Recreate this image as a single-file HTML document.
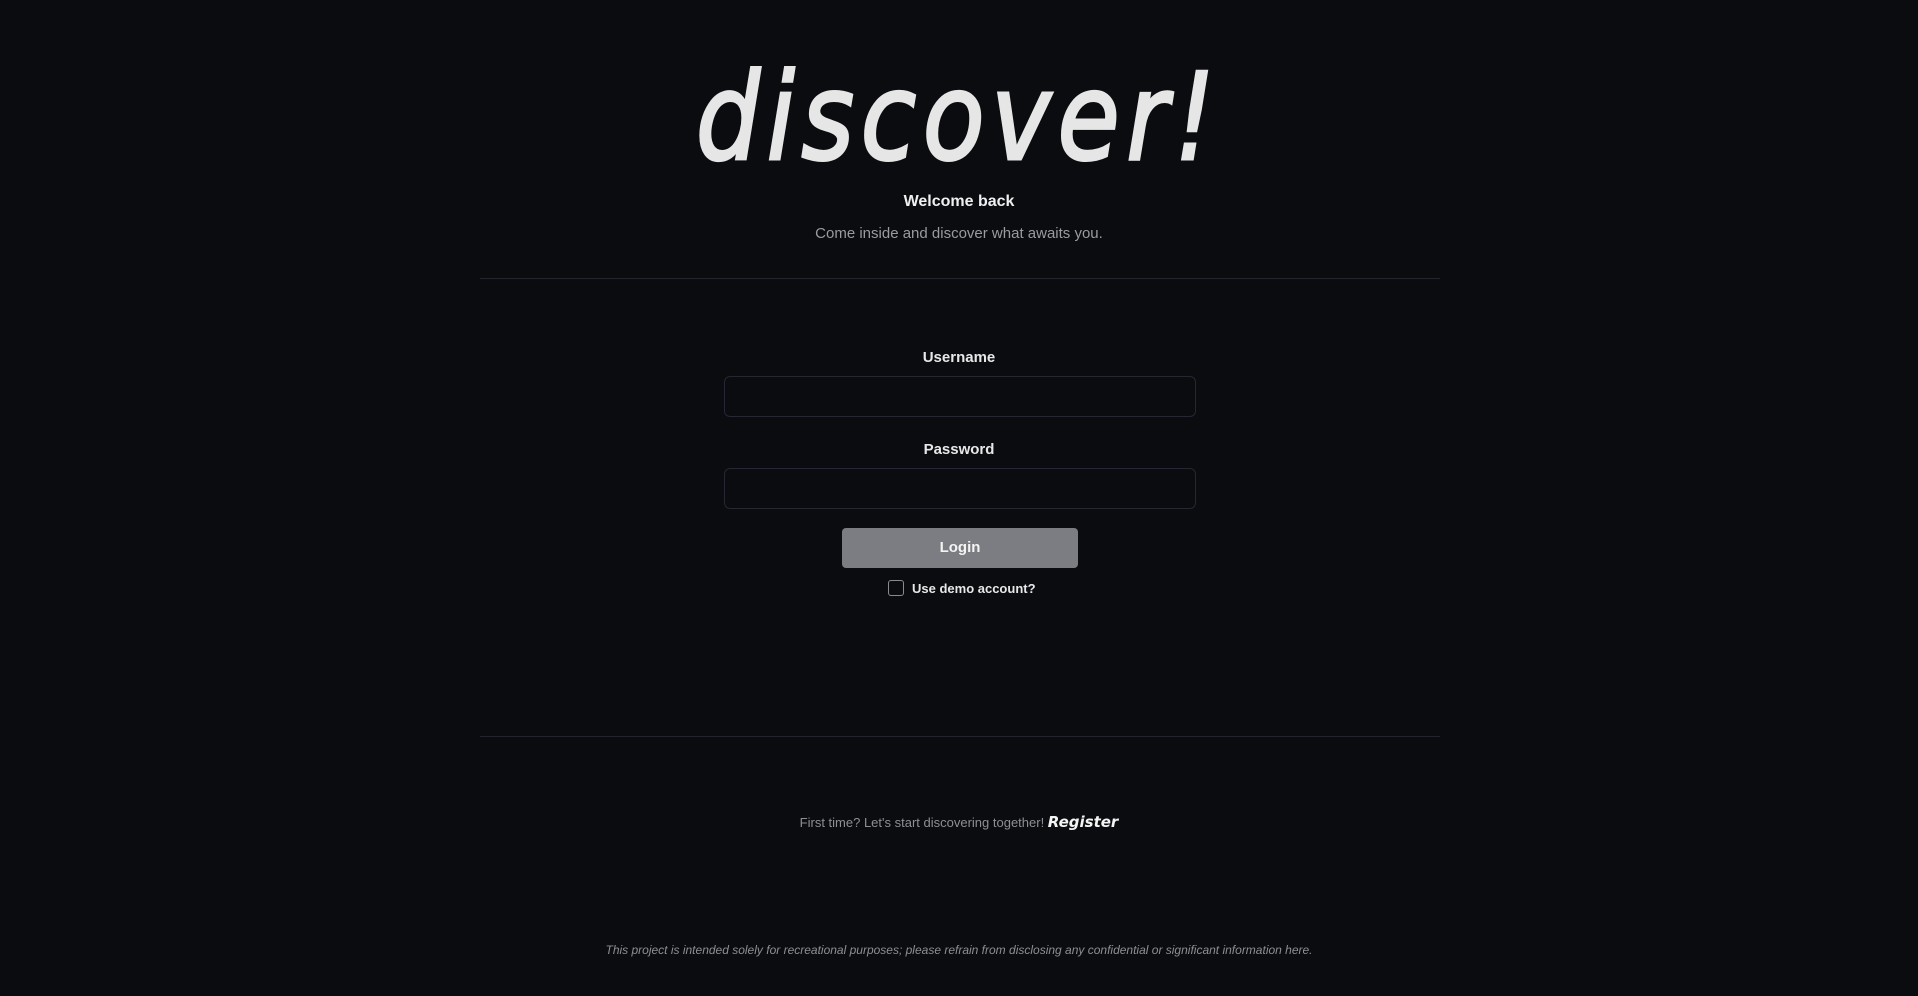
<!DOCTYPE html>
<html><head><meta charset="utf-8"><style>
html,body{margin:0;padding:0;background:#0b0c0f;width:1918px;height:996px;overflow:hidden;font-family:"Liberation Sans","DejaVu Sans",sans-serif;}
.a{position:absolute;left:0;width:1918px;text-align:center;}
.logo{top:44px;font-family:"DejaVu Sans",sans-serif;font-style:oblique;font-size:120px;color:#e6e6e6;line-height:150px;-webkit-text-stroke:3px #e6e6e6;}
.logo span{display:inline-block;transform:scaleX(0.84);letter-spacing:8px;}
.hr{position:absolute;left:480px;width:960px;height:1px;background:#23242d;}
.lbl{color:#e8e8e8;font-weight:bold;font-size:15px;}
.inp{position:absolute;left:724px;width:470px;height:39px;border:1px solid #262733;border-radius:6px;background:#0b0c0f;}
</style></head><body>
<div class="a logo"><span>discover!</span></div>
<div class="a" style="top:193px;font-weight:bold;font-size:16px;color:#f0f0f0;">Welcome back</div>
<div class="a" style="top:225px;font-size:15px;color:#9a9ba0;">Come inside and discover what awaits you.</div>
<div class="hr" style="top:278px"></div>
<div class="a lbl" style="top:349px">Username</div>
<div class="inp" style="top:376px"></div>
<div class="a lbl" style="top:441px">Password</div>
<div class="inp" style="top:468px"></div>
<div style="position:absolute;left:842px;top:528px;width:236px;height:40px;background:#7c7d82;border-radius:4px;color:#f4f4f4;font-weight:bold;font-size:15px;line-height:40px;text-align:center;">Login</div>
<div style="position:absolute;left:888px;top:580px;width:14px;height:14px;border:1px solid #8a8b90;border-radius:3px;"></div>
<div style="position:absolute;left:912px;top:581px;color:#e8e8e8;font-weight:bold;font-size:13px;">Use demo account?</div>
<div class="hr" style="top:736px"></div>
<div class="a" style="top:813px;font-size:13px;color:#8e8f94;">First time? Let's start discovering together! <span style="font-family:'DejaVu Sans',sans-serif;font-style:oblique;font-weight:bold;color:#f4f4f4;font-size:15px;">Register</span></div>
<div class="a" style="top:943px;font-size:12px;font-style:italic;color:#8e8f94;">This project is intended solely for recreational purposes; please refrain from disclosing any confidential or significant information here.</div>
</body></html>
